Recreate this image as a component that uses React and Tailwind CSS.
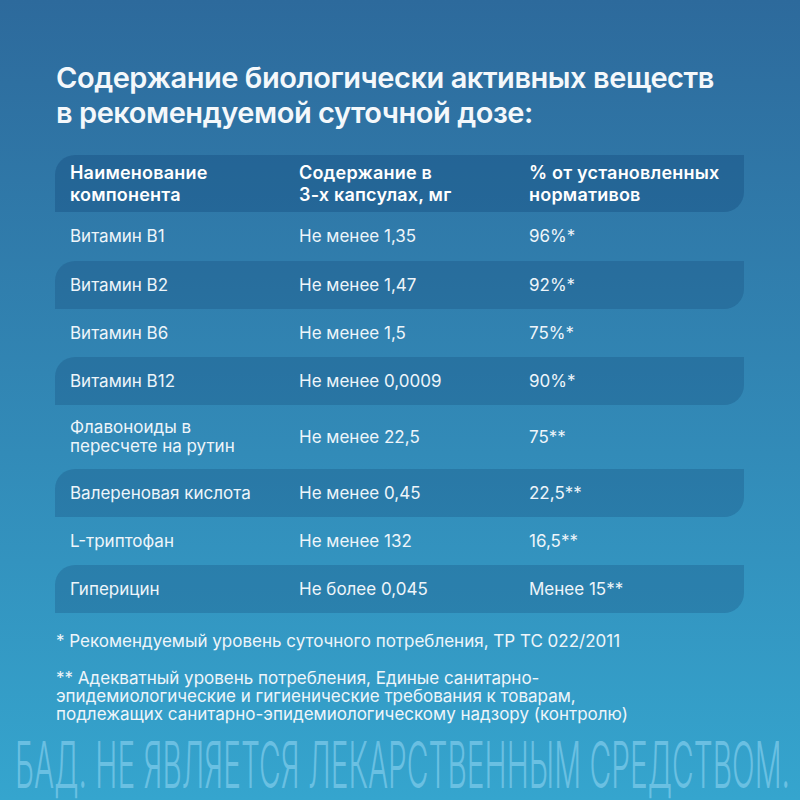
import React from "react";

const rows = [
  { a: "Витамин B1", b: "Не менее 1,35", c: "96%*", dark: false, h: "h-[49px]" },
  { a: "Витамин B2", b: "Не менее 1,47", c: "92%*", dark: true, h: "h-[48px]" },
  { a: "Витамин B6", b: "Не менее 1,5", c: "75%*", dark: false, h: "h-[48px]" },
  { a: "Витамин B12", b: "Не менее 0,0009", c: "90%*", dark: true, h: "h-[48px]" },
  { a: "Флавоноиды в\nпересчете на рутин", b: "Не менее 22,5", c: "75**", dark: false, h: "h-[64px]" },
  { a: "Валереновая кислота", b: "Не менее 0,45", c: "22,5**", dark: true, h: "h-[48px]" },
  { a: "L-триптофан", b: "Не менее 132", c: "16,5**", dark: false, h: "h-[48px]" },
  { a: "Гиперицин", b: "Не более 0,045", c: "Менее 15**", dark: true, h: "h-[48px]" },
];

export default function App() {
  return (
    <div className="w-[800px] h-[800px] overflow-hidden bg-gradient-to-b from-[#2d6a9c] to-[#35a5ce] text-white font-['Inter',sans-serif]">
      <div className="pl-[56px] pt-[60px]">
        <h1 className="text-[29px] leading-[35px] font-semibold tracking-[-0.45px] text-[#f4f8fb]">
          Содержание биологически активных веществ
          <br />
          в рекомендуемой суточной дозе:
        </h1>
      </div>

      <div className="ml-[55px] mt-[25px] w-[689px]">
        <div className="grid grid-cols-[229px_230px_1fr] items-center h-[57px] pl-[15px] bg-[#0e3f70]/30 rounded-tl-[20px] rounded-br-[20px] text-[18px] leading-[22px] font-semibold tracking-[0.2px]">
          <div>Наименование<br />компонента</div>
          <div>Содержание в<br />3-х капсулах, мг</div>
          <div>% от установленных<br />нормативов</div>
        </div>
        {rows.map((r, i) => (
          <div
            key={i}
            className={`grid grid-cols-[229px_230px_1fr] items-center pl-[15px] text-[17px] leading-[19px] text-[#eef5fa] ${r.h} ${
              r.dark ? "bg-[#0e3f70]/25 rounded-tl-[20px] rounded-br-[20px]" : ""
            }`}
          >
            <div className="whitespace-pre-line">{r.a}</div>
            <div>{r.b}</div>
            <div>{r.c}</div>
          </div>
        ))}
      </div>

      <div className="pl-[56px] mt-[19px] text-[17px] leading-[18px] text-[#eef5fa]">
        <p>* Рекомендуемый уровень суточного потребления, ТР ТС 022/2011</p>
        <p className="mt-[19px]">
          ** Адекватный уровень потребления, Единые санитарно-
          <br />
          эпидемиологические и гигиенические требования к товарам,
          <br />
          подлежащих санитарно-эпидемиологическому надзору (контролю)
        </p>
      </div>

      <div className="mt-[9px] pl-[15px] whitespace-nowrap">
        <span className="inline-block origin-left scale-x-[0.459] text-[65px] leading-none font-light text-[#7ccaea]/75">
          БАД. НЕ ЯВЛЯЕТСЯ ЛЕКАРСТВЕННЫМ СРЕДСТВОМ.
        </span>
      </div>
    </div>
  );
}
